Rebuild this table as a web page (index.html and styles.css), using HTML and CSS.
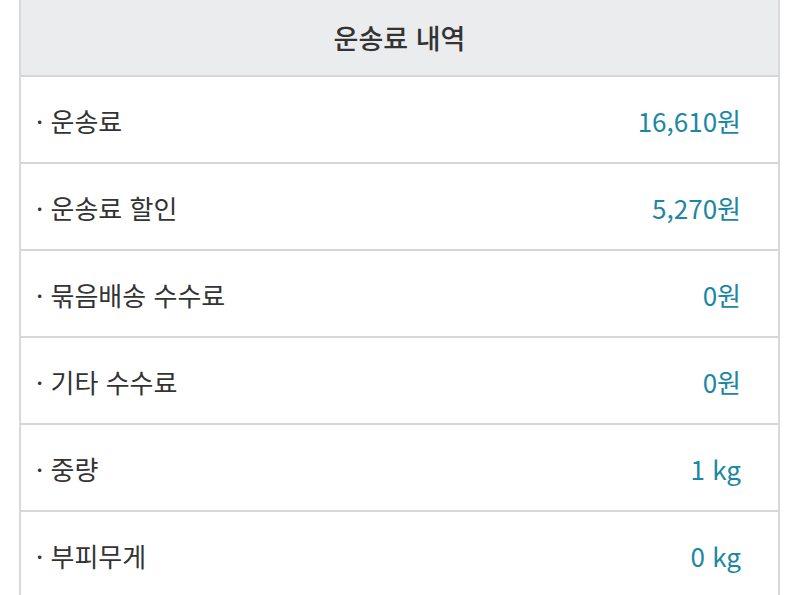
FILE: index.html
```html
<!DOCTYPE html>
<html lang="ko">
<head>
<meta charset="utf-8">
<link rel="stylesheet" href="styles.css">
</head>
<body>
<div class="box">
  <div class="head">운송료 내역</div>
  <div class="row"><span class="label">· 운송료</span><span class="val">16,610원</span></div>
  <div class="row"><span class="label">· 운송료 할인</span><span class="val">5,270원</span></div>
  <div class="row"><span class="label">· 묶음배송 수수료</span><span class="val">0원</span></div>
  <div class="row"><span class="label">· 기타 수수료</span><span class="val">0원</span></div>
  <div class="row"><span class="label">· 중량</span><span class="val">1 kg</span></div>
  <div class="row"><span class="label">· 부피무게</span><span class="val">0 kg</span></div>
</div>
</body>
</html>
```
FILE: styles.css
```css
html, body { margin: 0; padding: 0; background: #fff; }
body { font-family: "Noto Sans CJK KR", "Noto Sans", sans-serif; overflow: hidden; }
.box {
  margin-left: 19px;
  width: 761px;
  box-sizing: border-box;
  border-left: 2px solid #d9d9db;
  border-right: 2px solid #d9d9db;
}
.head {
  height: 75px;
  background: #ebecee;
  border-bottom: 2px solid #d6d6d8;
  display: flex;
  align-items: center;
  justify-content: center;
  font-size: 27px;
  font-weight: 500;
  color: #333;
}
.row {
  height: 83px;
  box-sizing: content-box;
  border-bottom: 2px solid #d6d6d8;
  display: flex;
  align-items: center;
  justify-content: space-between;
  padding: 2px 37px 0 15px;
  font-size: 26px;
}
.label { color: #333; }
.val { color: #1b87a3; }
```
